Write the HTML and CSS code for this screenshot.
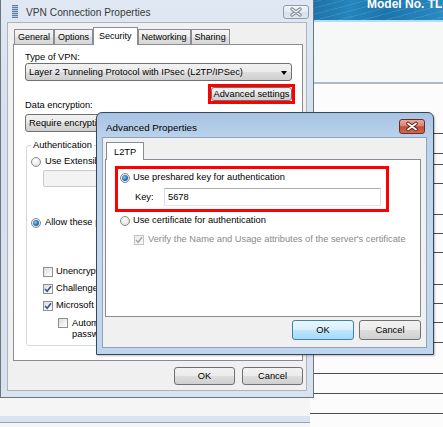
FILE: index.html
```html
<!DOCTYPE html>
<html>
<head>
<meta charset="utf-8">
<title>VPN Connection Properties</title>
<link rel="stylesheet" href="styles.css">
</head>
<body>
<div class="desk">

  <div class="webpage">
    <div class="wp-header"><span class="wp-model">Model No. TL</span></div>
    <div class="wp-stripe"></div>
    <div class="wp-grey"></div>
    <div class="wp-rule"></div>
    <div class="wp-row h50"></div>
    <div class="wp-row h20"></div>
    <div class="wp-row h11"></div>
    <div class="wp-row h19"></div>
    <div class="wp-row h31"></div>
    <div class="wp-row h19"></div>
    <div class="wp-row h19"></div>
    <div class="wp-row h32"></div>
    <div class="wp-row h19"></div>
    <div class="wp-row h19"></div>
    <div class="wp-row h20"></div>
    <div class="wp-row h31"></div>
    <div class="wp-row h20"></div>
    <div class="wp-row h20"></div>
  </div>

  <div class="behind"><div class="behind-band"></div></div>

  <div class="main-win">
    <div class="main-title">
      <svg class="app-icon" width="6" height="13" viewBox="0 0 6 13">
        <rect x="0" y="0" width="6" height="13" fill="#b7c8dc"/>
        <g fill="#5d7da3">
          <rect x="0" y="0" width="6" height="1"/>
          <rect x="0" y="2" width="6" height="1"/>
          <rect x="0" y="4" width="6" height="1"/>
          <rect x="0" y="6" width="6" height="1"/>
          <rect x="0" y="8" width="6" height="1"/>
          <rect x="0" y="10" width="6" height="1"/>
          <rect x="0" y="12" width="6" height="1"/>
        </g>
      </svg>
      <span class="main-title-text">VPN Connection Properties</span>
      <span class="close-inactive">
        <svg width="24" height="12" viewBox="0 0 24 12">
          <path d="M8 3 L16 9 M16 3 L8 9" stroke="#6f7c8b" stroke-width="3.4" stroke-linecap="round"/>
          <path d="M8 3 L16 9 M16 3 L8 9" stroke="#ffffff" stroke-width="1.5" stroke-linecap="round"/>
        </svg>
      </span>
    </div>
    <div class="main-client">
      <div class="tabs">
        <span class="tab">General</span>
        <span class="tab">Options</span>
        <span class="tab active">Security</span>
        <span class="tab">Networking</span>
        <span class="tab">Sharing</span>
      </div>
      <div class="panel main-panel">
        <div class="text-line l-type">Type of VPN:</div>
        <div class="combo"><span class="combo-text">Layer 2 Tunneling Protocol with IPsec (L2TP/IPSec)</span><i class="arrow"></i></div>
        <div class="adv-row">
          <div class="redbox"><span class="btn btn-adv">Advanced settings</span></div>
        </div>
        <div class="text-line l-enc">Data encryption:</div>
        <div class="combo combo-enc"><span class="combo-text">Require encryption (disconnect if server declines)</span><i class="arrow"></i></div>
        <fieldset class="auth">
          <legend>Authentication</legend>
          <div class="opt"><span class="radio"></span><span>Use Extensible Authentication Protocol (EAP)</span></div>
          <div class="eap-box"></div>
          <div class="opt opt-allow"><span class="radio checked"></span><span>Allow these protocols</span></div>
          <div class="opt chk-row chk-first"><span class="check"></span><span>Unencrypted password (PAP)</span></div>
          <div class="opt chk-row chk-next"><span class="check checked"><svg width="8" height="8" viewBox="0 0 8 8"><path d="M1 4 L3.2 6.3 L7 1.2" fill="none" stroke="#3d4f86" stroke-width="1.6"/></svg></span><span>Challenge Handshake Authentication Protocol (CHAP)</span></div>
          <div class="opt chk-row chk-next"><span class="check checked"><svg width="8" height="8" viewBox="0 0 8 8"><path d="M1 4 L3.2 6.3 L7 1.2" fill="none" stroke="#3d4f86" stroke-width="1.6"/></svg></span><span>Microsoft CHAP Version 2 (MS-CHAP v2)</span></div>
          <div class="autom-row"><span class="check"></span><span class="autom-text">Automatically use my Windows logon name and<br>password (and domain if any)</span></div>
        </fieldset>
      </div>
      <div class="button-row main-buttons">
        <span class="btn main-btn">OK</span>
        <span class="btn main-btn">Cancel</span>
      </div>
    </div>
  </div>

  <div class="adv-win">
    <div class="adv-title">
      <span class="adv-title-text">Advanced Properties</span>
      <span class="close-red">
        <svg width="24" height="13" viewBox="0 0 24 13">
          <path d="M8 3.5 L16 9.5 M16 3.5 L8 9.5" stroke="#5c1f18" stroke-width="3.6" stroke-linecap="round"/>
          <path d="M8 3.5 L16 9.5 M16 3.5 L8 9.5" stroke="#ffffff" stroke-width="1.7" stroke-linecap="round"/>
        </svg>
      </span>
    </div>
    <div class="adv-client">
      <div class="tabs adv-tabs">
        <span class="tab active single">L2TP</span>
      </div>
      <div class="panel adv-panel">
        <div class="redbox redbox-key">
          <div class="opt opt-psk"><span class="radio checked"></span><span>Use preshared key for authentication</span></div>
          <div class="key-row"><span class="key-label">Key:</span><span class="key-input">5678</span></div>
        </div>
        <div class="opt cert-row"><span class="radio"></span><span>Use certificate for authentication</span></div>
        <div class="opt verify-row"><span class="check disabled"><svg width="8" height="8" viewBox="0 0 8 8"><path d="M1 4 L3.2 6.3 L7 1.2" fill="none" stroke="#a9a9a9" stroke-width="1.5"/></svg></span><span>Verify the Name and Usage attributes of the server's certificate</span></div>
      </div>
      <div class="button-row adv-buttons">
        <span class="btn adv-btn default">OK</span>
        <span class="btn adv-btn">Cancel</span>
      </div>
    </div>
  </div>

</div>
</body>
</html>
```

FILE: styles.css
```css
* { box-sizing: border-box; }
html, body { margin: 0; padding: 0; }
body {
  width: 443px;
  height: 427px;
  overflow: hidden;
  font-family: "Liberation Sans", Arial, sans-serif;
  font-size: 9.3px;
  color: #000;
  background: #f5f5f5;
}
.desk { position: relative; width: 443px; height: 427px; overflow: hidden; }

/* ---------- web page behind ---------- */
.webpage {
  position: absolute;
  left: 300px;
  top: 0;
  width: 143px;
  height: 427px;
  background: #fcfcfc;
  display: flex;
  flex-direction: column;
}
.wp-header {
  flex: none;
  height: 20px;
  overflow: hidden;
  padding-left: 67px;
  color: #fff;
  font-weight: bold;
  font-size: 12px;
  line-height: 12px;
  white-space: nowrap;
  background:
    repeating-linear-gradient(165deg, rgba(255,255,255,0) 0 5px, rgba(255,255,255,0.10) 5px 6px),
    linear-gradient(100deg, #1a6b9e 0%, #2585bd 35%, #1c75ab 60%, #2a8ac2 100%);
}
.wp-model { display: block; margin-top: -2px; }
.wp-stripe { flex: none; height: 2px; background: #b2dff0; }
.wp-grey { flex: none; height: 60px; background: #f6f7f7; }
.wp-rule { flex: none; height: 2px; background: #a6bdcc; }
.wp-row { flex: none; border-bottom: 1px solid #4d4d4d; }
.h11 { height: 11px; }
.h19 { height: 19px; }
.h20 { height: 20px; }
.h31 { height: 31px; }
.h32 { height: 32px; }
.h50 { height: 50px; }

.behind {
  position: absolute;
  left: 0;
  top: 390px;
  width: 310px;
  height: 37px;
  background: #f5f5f5;
  padding-top: 26px;
}
.behind-band { height: 7px; background: #d8e5f1; border-bottom: 1px solid #9aa3ad; }

/* ---------- shared widgets ---------- */
.tabs {
  position: relative;
  z-index: 1;
  display: flex;
  align-items: flex-end;
  height: 18px;
  margin-bottom: -1px;
  padding-left: 1px;
  flex: none;
}
.tab {
  height: 15px;
  margin-bottom: 1px;
  padding: 0 3px;
  font-size: 9px;
  line-height: 14px;
  border: 1px solid #898c95;
  border-bottom: none;
  background: linear-gradient(#f6f6f6, #ececec 50%, #e0e0e0 51%, #d8d8d8);
  white-space: nowrap;
}
.tab.active {
  height: 18px;
  margin-bottom: 0;
  padding: 1px 5px 0;
  background: #fff;
}
.tab.single { padding: 2px 7px 0; font-size: 9.3px; }

.panel {
  flex: none;
  border: 1px solid #898c95;
  background: #fff;
}

.text-line { line-height: 11px; white-space: nowrap; }

.combo {
  height: 18px;
  border: 1px solid #707070;
  border-radius: 3px;
  background: linear-gradient(#f2f2f2, #ebebeb 48%, #dddddd 52%, #cfcfcf);
  display: flex;
  align-items: center;
  padding-left: 3px;
  line-height: 11px;
  white-space: nowrap;
  overflow: hidden;
}
.combo-text { flex: 1; overflow: hidden; }
.arrow {
  flex: none;
  width: 0;
  height: 0;
  margin: 1px 4px 0 2px;
  border-left: 3.5px solid transparent;
  border-right: 3.5px solid transparent;
  border-top: 4px solid #000;
}

.btn {
  display: flex;
  align-items: center;
  justify-content: center;
  border: 1px solid #707070;
  border-radius: 3px;
  background: linear-gradient(#f2f2f2, #ebebeb 48%, #dddddd 52%, #cfcfcf);
  white-space: nowrap;
  line-height: 11px;
}
.btn.default {
  border-color: #3c7fb1;
  background: linear-gradient(#eaf6fd, #d9f0fc 48%, #bee6fd 52%, #a7d9f5);
}

.redbox { border: 3px solid #ff0000; }

.opt {
  display: flex;
  align-items: center;
  gap: 4px;
  height: 11px;
  line-height: 11px;
  white-space: nowrap;
}
.radio {
  flex: none;
  width: 10px;
  height: 10px;
  border-radius: 50%;
  border: 1px solid #8a8a8a;
  background: radial-gradient(circle at 40% 35%, #ffffff 0%, #f1f1f1 40%, #d4d4d4 100%);
  display: grid;
  place-items: center;
}
.radio.checked::after {
  content: "";
  width: 6px;
  height: 6px;
  border-radius: 50%;
  background: radial-gradient(circle at 40% 40%, #8fd0f5 0%, #2f7dbd 45%, #164f82 100%);
}
.check {
  flex: none;
  width: 10px;
  height: 10px;
  border: 1px solid #8f8f8f;
  background: linear-gradient(135deg, #dadada, #f7f7f7 70%, #ffffff);
  display: grid;
  place-items: center;
}
.check svg { display: block; }
.check.disabled { border-color: #c4c4c4; background: linear-gradient(135deg, #ececec, #fafafa); }

.button-row { display: flex; justify-content: flex-end; flex: none; }

/* ---------- main window ---------- */
.main-win {
  position: absolute;
  left: 0;
  top: 0;
  z-index: 2;
  width: 314px;
  height: 398px;
  border: 1px solid #6b7683;
  border-top: none;
  background: linear-gradient(#e0e9f3, #d5e0ec 30%, #d9e3ee);
  padding: 0 6px 6px 6px;
  display: flex;
  flex-direction: column;
}
.main-title { flex: none; height: 22px; display: flex; align-items: flex-start; }
.app-icon { flex: none; margin: 5px 0 0 5px; display: block; }
.main-title-text {
  margin: 6px 0 0 8px;
  font-size: 10.2px;
  line-height: 13px;
  color: #3a3a3a;
  white-space: nowrap;
}
.close-inactive {
  flex: none;
  margin: 5px -2px 0 auto;
  width: 26px;
  height: 14px;
  border: 1px solid #8f9cab;
  border-radius: 3px;
  background: linear-gradient(#f4f7fa, #e3e9f0 50%, #d8e0e9 51%, #e0e7ef);
  display: grid;
  place-items: center;
}
.close-inactive svg { display: block; }

.main-client {
  flex: none;
  height: 369px;
  border: 1px solid #a9b5c2;
  background: #f0f0f0;
  padding: 4px 3px 0 5px;
  display: flex;
  flex-direction: column;
}
.main-panel { height: 317px; padding: 0 10px 0 11px; }
.l-type { margin-top: 7px; }
.adv-row { display: flex; justify-content: flex-end; margin: 3px -3px 0 0; }
.btn-adv { width: 81px; height: 14px; }
.l-enc { margin-top: -4px; }
.combo-enc { margin-top: 3px; }

.auth {
  margin: 8px 1px 0 1px;
  padding: 5px 4px 5px 4px;
  border: 1px solid #d0d9df;
  border-radius: 3px;
  min-width: 0;
}
.auth legend { padding: 0 2px; line-height: 11px; }
.eap-box {
  margin: 3px 0 0 12px;
  height: 17px;
  border: 1px solid #c9c9c9;
  border-radius: 2px;
  background: #f3f3f3;
}
.opt-allow { margin-top: 30px; }
.chk-row { margin-left: 12px; gap: 3px; }
.chk-first { margin-top: 38px; }
.chk-next { margin-top: 6px; }
.autom-row {
  display: flex;
  align-items: flex-start;
  gap: 4px;
  margin: 7px 0 0 27px;
  line-height: 11px;
  white-space: nowrap;
}

.main-buttons { gap: 7px; margin-top: 6px; }
.main-btn { width: 61px; height: 18px; }

/* ---------- advanced dialog ---------- */
.adv-win {
  position: absolute;
  left: 96px;
  top: 112px;
  z-index: 3;
  width: 338px;
  height: 243px;
  border: 1px solid #33475d;
  border-radius: 6px 6px 0 0;
  background: linear-gradient(#a7c3e2, #bad2eb 24px, #c5daef 60%, #bfd5ed);
  padding: 0 6px 6px 5px;
  display: flex;
  flex-direction: column;
  box-shadow: 1px 1px 2px rgba(0,0,0,0.25);
}
.adv-title { flex: none; height: 24px; display: flex; align-items: flex-start; }
.adv-title-text {
  margin: 8px 0 0 4px;
  font-size: 9.8px;
  line-height: 13px;
  white-space: nowrap;
}
.close-red {
  flex: none;
  margin: 6px 2px 0 auto;
  width: 26px;
  height: 15px;
  border: 1px solid #6e2a22;
  border-radius: 3px;
  background: linear-gradient(#e9aa9f, #d98474 45%, #c44a33 52%, #d06a55);
  display: grid;
  place-items: center;
}
.close-red svg { display: block; }

.adv-client {
  flex: none;
  height: 211px;
  border: 1px solid #8ea3bc;
  background: #f0f0f0;
  padding: 4px 5px 0 2px;
  display: flex;
  flex-direction: column;
}
.adv-panel { height: 158px; }
.redbox-key {
  margin: 6px 0 0 9px;
  width: 274px;
  height: 46px;
  padding: 3px 0 0 2px;
}
.opt-psk { gap: 3px; }
.key-row { display: flex; align-items: center; height: 18px; margin: 5px 0 0 15px; }
.key-label { flex: none; width: 29px; line-height: 11px; }
.key-input {
  flex: none;
  width: 217px;
  height: 18px;
  border: 1px solid #abadb3;
  border-left-color: #dbdfe6;
  border-right-color: #dbdfe6;
  border-bottom-color: #e3e9ef;
  background: #fff;
  padding-left: 3px;
  display: flex;
  align-items: center;
  line-height: 11px;
}
.cert-row { margin: 3px 0 0 14px; gap: 3px; }
.verify-row { margin: 8px 0 0 28px; gap: 4px; color: #8a8a8a; }
.adv-buttons { gap: 5px; margin-top: 3px; }
.adv-btn { width: 62px; height: 20px; }
```
